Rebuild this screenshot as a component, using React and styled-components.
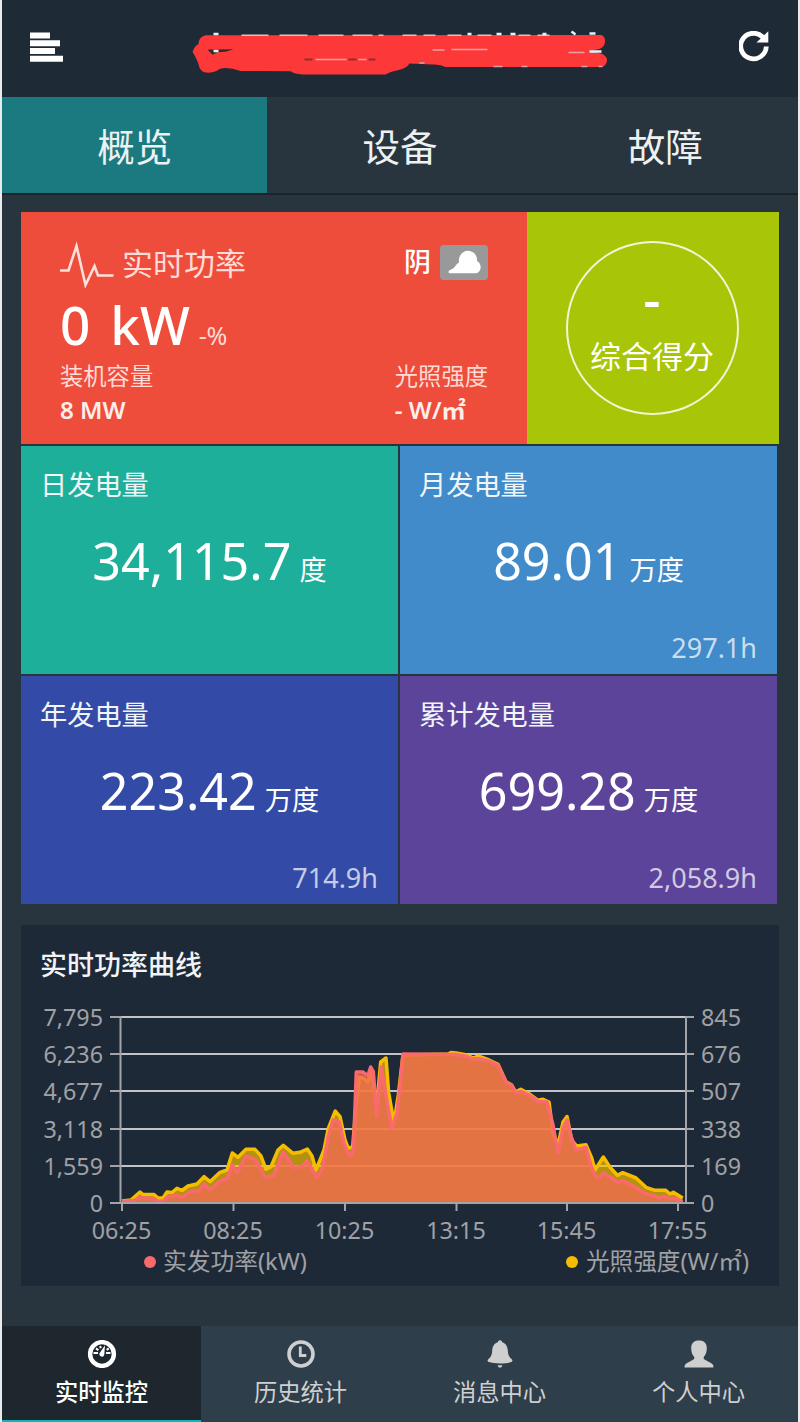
import styled, { createGlobalStyle } from "styled-components";

const tiles = [
  { label: "日发电量", value: "34,115.7", unit: "度", hours: "", color: "#1eaf9b" },
  { label: "月发电量", value: "89.01", unit: "万度", hours: "297.1h", color: "#418bca" },
  { label: "年发电量", value: "223.42", unit: "万度", hours: "714.9h", color: "#344aa7" },
  { label: "累计发电量", value: "699.28", unit: "万度", hours: "2,058.9h", color: "#5d449b" },
];

const rows = [
  { y: 1017, left: "7,795", right: "845" },
  { y: 1054, left: "6,236", right: "676" },
  { y: 1091, left: "4,677", right: "507" },
  { y: 1129, left: "3,118", right: "338" },
  { y: 1166, left: "1,559", right: "169" },
  { y: 1203, left: "0", right: "0" },
];

const times = [
  { x: 122, text: "06:25" },
  { x: 233.5, text: "08:25" },
  { x: 345, text: "10:25" },
  { x: 456.5, text: "13:15" },
  { x: 567, text: "15:45" },
  { x: 678, text: "17:55" },
];

const light =
  "122,1201 131,1200 140,1192 143,1194.5 154,1194.5 158,1198 163,1198 167,1192 172,1192.5 177,1188.3 182,1190.5 188,1186 197,1184 204,1176.7 210,1181.7 220,1172.3 227,1170 232.3,1153 238,1157.3 246,1149.3 255,1149.3 261,1156 266,1169.3 271,1166.7 278,1150 283.3,1145.3 293,1153.3 300,1152.3 307.3,1149 312,1156 316,1170 324,1150 328.3,1128.3 335.3,1111 340,1116.7 345,1140 348.3,1148.3 352.7,1146.7 356,1105 359.3,1077 363.3,1078 367.7,1082 371.7,1071 376.7,1106 380.7,1062 386,1058 388.7,1093 394,1122.7 398.3,1095 403,1055 448,1054 451,1052.5 456,1053 467,1055 473,1058 478,1056 489,1060 498,1064.3 506,1081.7 511.7,1085 515.7,1092 520.7,1089.3 530,1094.3 538,1100.3 543,1099.3 549,1102 553,1133 558,1145 563,1122 567,1116.5 571.7,1140 576.7,1146 586,1144.7 591.7,1158 595,1170 603.3,1157 610,1167.3 617.3,1175.3 622.7,1172.7 636,1178 646,1187.3 655,1190.3 665.7,1190.3 670,1194 673.3,1192.3 682.7,1198";

const power =
  "122,1201.5 134,1200.5 140,1197.7 154,1198.7 158,1201.5 163,1201.5 167,1197.3 177,1195.3 182,1197.3 190,1192 199,1190.7 204,1184 210,1190 220,1180.7 227,1178.7 232.3,1165 237.3,1172.7 246,1156 256,1160 265,1177.3 273.3,1176 283.3,1152 293.3,1167.3 301,1166.7 307.3,1161 316.7,1177.3 322.7,1168.3 328.3,1136.7 333,1120 339.3,1122 344,1143.3 349.3,1156 353.3,1151.7 356.3,1072 362.7,1072 367.7,1075.7 370.7,1067 373.3,1071.7 376.7,1116 381.3,1067 386.7,1100 391.7,1128.3 397,1113 400,1086 403,1054 456,1054.5 467,1056.5 473,1059 478,1058.5 489,1061 498,1065 506,1082 511.7,1085.5 515.7,1093 521,1091.5 530,1095.5 538,1101.5 547,1102 553,1125 558,1153 563,1128 567,1120 571,1136 576,1150 586,1147.5 591,1166 596,1177 600,1177 603.5,1173 610,1177 618,1182.5 623,1180.5 636,1187.5 645,1193.5 655,1196 659,1198 664,1196 670,1199 675,1198 682.7,1202";

function App() {
  return (
    <>
      <GlobalStyle />
      <Page>
        <Header>
          <MenuIcon />
          <TitleMark />
          <RefreshIcon />
        </Header>
        <Tabs>
          <Tab $active>概览</Tab>
          <Tab>设备</Tab>
          <Tab>故障</Tab>
        </Tabs>
        <Content>
          <TopRow>
            <PowerCard>
              <PowerHead>
                <PulseIcon />
                <PowerTitle>实时功率</PowerTitle>
                <Weather>阴</Weather>
                <WeatherBadge>
                  <CloudIcon />
                </WeatherBadge>
              </PowerHead>
              <PowerValue>
                <span>0</span>
                <span>kW</span>
                <small>-%</small>
              </PowerValue>
              <PowerInfo>
                <div>
                  <InfoLabel>装机容量</InfoLabel>
                  <InfoValue>8 MW</InfoValue>
                </div>
                <div>
                  <InfoLabel>光照强度</InfoLabel>
                  <InfoValue>- W/㎡</InfoValue>
                </div>
              </PowerInfo>
            </PowerCard>
            <ScoreCard>
              <ScoreCircle>
                <Score>-</Score>
                <ScoreLabel>综合得分</ScoreLabel>
              </ScoreCircle>
            </ScoreCard>
          </TopRow>
          <TileGrid>
            {tiles.map((tile) => (
              <Tile key={tile.label} $color={tile.color}>
                <TileLabel>{tile.label}</TileLabel>
                <TileValue>
                  {tile.value}
                  <TileUnit>{tile.unit}</TileUnit>
                </TileValue>
                <TileHours>{tile.hours}</TileHours>
              </Tile>
            ))}
          </TileGrid>
          <ChartPanel>
            <ChartTitle>实时功率曲线</ChartTitle>
            <PowerChart />
          </ChartPanel>
        </Content>
        <BottomNav>
          <NavItem $active>
            <GaugeIcon />
            <NavText $active>实时监控</NavText>
          </NavItem>
          <NavItem>
            <ClockIcon />
            <NavText>历史统计</NavText>
          </NavItem>
          <NavItem>
            <BellIcon />
            <NavText>消息中心</NavText>
          </NavItem>
          <NavItem>
            <UserIcon />
            <NavText>个人中心</NavText>
          </NavItem>
        </BottomNav>
      </Page>
    </>
  );
}

export default App;

function MenuIcon() {
  return (
    <svg width="34" height="30" viewBox="0 0 34 30" fill="#fff">
      <path d="M0 .5h20v6H0zM0 8.3h30v6H0zM0 16h25v6H0zM0 23.7h33v6H0z" />
    </svg>
  );
}

function RefreshIcon() {
  return (
    <svg width="32" height="32" viewBox="0 0 32 32">
      <path
        d="M25 7.700A12.800 12.800 0 1 0 27.300 15.500"
        fill="none"
        stroke="#fff"
        strokeWidth="4.800"
      />
      <path d="M29.300 .3v11.300H17.400z" fill="#fff" />
    </svg>
  );
}

// station name, scribbled over
function TitleMark() {
  return (
    <svg width="420" height="56" viewBox="191.500 19 420 56">
      <path
        d="M192 52Q194 46 198 44Q198 37 205 35.2L601 35Q605 37 604.5 42Q604 47 599 49L590 51L602 54Q607 57 606.5 61Q605 67 600 67L445 67Q440 64 432 64.5L409 63.5Q406 68 400 69.5Q392 71 385 74.5L302 74.5Q294 74 290 71.3L240 71Q232 68 225 68Q219 68 216 71Q209 74 203 72Q199 70 198 64Q195 56 192 52Z"
        fill="#fd3838"
      />
      <path d="M207 49.5h7l19-.3-8 2.5-8 .5-5 2.5Z" fill="#33292e" />
      <path
        d="M241 35.3h27M279 35.3h28M318 35.3h25M352 35.3h20M378 35.3h5M402 35.3h14M423 35.3h12M447 35.3h14M477 35.3h14M518 35.3h12M537 35.3h12"
        stroke="#d9c3c8"
        strokeWidth="1.6"
      />
      <path
        d="M213 34h5M213 51h5M467 34h4M496 34h5M510 34h5M542 34h4M571 31.500l4 3M589 33.500h6M589 51.500h12"
        stroke="#e6f2f6"
        strokeWidth="2.500"
      />
      <path d="M304 59.500h8M348 59.500h8M368 59.500h7" stroke="#8c3035" strokeWidth="2" />
      <path
        d="M315 59.500h31M358 59.500h8M432 50h12M451 49.500h36M568 52.500h16"
        stroke="#f0a0a2"
        strokeWidth="1.500"
      />
      <path d="M419 63h5M493 66.500h9M521 66.500h6M581 66.500h6M598 66.500h4" stroke="#d2a0a6" strokeWidth="1.400" />
    </svg>
  );
}

function PulseIcon() {
  return (
    <svg width="54" height="50" viewBox="0 -5 54 50">
      <path
        d="M0 27.500h8.500L16.500 3 25.500 42 34.500 23l3.500 9.500h15.500"
        fill="none"
        stroke="#fde0dc"
        strokeWidth="2.600"
      />
    </svg>
  );
}

function CloudIcon() {
  return (
    <svg width="33" height="24" viewBox="0 0 33 24" fill="#fff">
      <path d="M2 23.300C.2 23.300 0 21 1.800 20.200 4.500 19 6 18 7.200 16.200 8.300 14.300 9.600 13.300 11 12.800 10 6 14.500 .8 20 .8c5.500 0 9.600 4.700 9 10.200 2.700 1.300 4.200 4.600 3.500 7.500-.6 3-2.500 4.800-5 4.800Z" />
    </svg>
  );
}

function GaugeIcon() {
  return (
    <svg width="30" height="28" viewBox="0 0 30 28">
      <circle cx="15" cy="14" r="11.900" fill="none" stroke="#fff" strokeWidth="4.400" />
      <path d="M12.400 13.600 18 5.200 17.300 14.500Q17 16.800 15 16.800 12.300 16.300 12.400 13.600Z" fill="#fff" />
      <path d="M6.500 13h4.500M19 13h4.500M9 8.400l2.400 1.800M13.200 6l.5 2.200M19.700 9.900l2-1.500" stroke="#fff" strokeWidth="2" />
    </svg>
  );
}

function ClockIcon() {
  return (
    <svg width="30" height="28" viewBox="0 0 30 28" fill="none" stroke="#cfcfcf">
      <circle cx="15" cy="14" r="12" strokeWidth="3.600" />
      <path d="M14.300 6.500v9h6" strokeWidth="2.800" />
    </svg>
  );
}

function BellIcon() {
  return (
    <svg width="30" height="28" viewBox="0 0 30 28" fill="#cfcfcf">
      <path d="M15 .3c1.300 0 1.900 1 2.100 1.900 4 1.200 5.400 4.400 5.700 8.300.3 5 1.500 6.800 4.200 9 .8.800.4 2.300-.8 2.600-3 .8-6.500 1.300-11.200 1.300s-8.200-.5-11.200-1.300c-1.200-.3-1.600-1.800-.8-2.600 2.700-2.200 3.900-4 4.200-9 .3-3.900 1.700-7.100 5.700-8.300.2-.9.800-1.900 2.100-1.900Z" />
      <path d="M12.600 25.300h4.800l-.8 1.800q-1.600 1-3.200 0Z" />
    </svg>
  );
}

function UserIcon() {
  return (
    <svg width="30" height="28" viewBox="0 0 30 28" fill="#cfcfcf">
      <path d="M15 .4c5 0 7.800 2.500 7.800 7.500 0 3.800-1 7-3.100 9v1.700c.4 1.200 2.500 2 4.800 3.200 3 1.500 4.600 2.500 4.900 4.200v1.600H.6V26c.3-1.700 1.900-2.700 4.900-4.200 2.300-1.200 4.400-2 4.800-3.200v-1.700c-2.100-2-3.100-5.200-3.100-9C7.200 2.900 10 .4 15 .4Z" />
    </svg>
  );
}

function PowerChart() {
  return (
    <ChartSvg width="758" height="290" viewBox="21 996 758 290">
      {rows.map((row) => (
        <g key={row.y}>
          <line x1="120" x2="687" y1={row.y} y2={row.y} stroke="#c2c4c7" strokeWidth="2" />
          <text x="103" y={row.y + 8.500} textAnchor="end">
            {row.left}
          </text>
          <text x="701" y={row.y + 8.500}>
            {row.right}
          </text>
        </g>
      ))}
      <polygon points={`122,1203 ${light} 682.700,1203`} fill="#f5bd00" opacity="0.7" />
      <polyline points={light} fill="none" stroke="#f6bd00" strokeWidth="3.500" strokeLinejoin="round" />
      <polygon points={`122,1203 ${power} 682.700,1203`} fill="#f46a54" opacity="0.75" />
      <polyline points={power} fill="none" stroke="#fa6a6d" strokeWidth="3.500" strokeLinejoin="round" />
      <g stroke="#a3a4a7" strokeWidth="2">
        <path d="M120.500 1016v187M686 1016v187M110 1203h584" />
        {rows.map((row) => (
          <path key={row.y} d={`M110 ${row.y}h10M686 ${row.y}h8`} />
        ))}
        {times.map((time) => (
          <path key={time.text} d={`M${time.x} 1203v8`} />
        ))}
      </g>
      {times.map((time) => (
        <text key={time.text} x={time.x - 0.500} y="1238.500" textAnchor="middle">
          {time.text}
        </text>
      ))}
      <circle cx="150" cy="1262" r="6" fill="#fa6a6d" />
      <text x="163" y="1270" textLength="144" lengthAdjust="spacingAndGlyphs">
        实发功率(kW)
      </text>
      <circle cx="572" cy="1262" r="6" fill="#f5bd00" />
      <text x="586" y="1270" textLength="163" lengthAdjust="spacingAndGlyphs">
        光照强度(W/㎡)
      </text>
    </ChartSvg>
  );
}

const GlobalStyle = createGlobalStyle`
  * {
    box-sizing: border-box;
  }

  body {
    margin: 0;
    background: #e9ecee;
    font-family: "Noto Sans", "Noto Sans CJK SC", sans-serif;
  }

  svg {
    display: block;
    flex-shrink: 0;
  }
`;

const Page = styled.div`
  width: 796px;
  height: 1422px;
  margin-left: 2px;
  display: flex;
  flex-direction: column;
  background: #28353e;
  color: #fff;
  overflow: hidden;
`;

const Header = styled.header`
  height: 97px;
  flex-shrink: 0;
  display: flex;
  justify-content: space-between;
  align-items: center;
  padding: 0 27px 3px 28px;
  background: #1e2a35;
`;

const Tabs = styled.nav`
  height: 98px;
  flex-shrink: 0;
  display: flex;
  border-bottom: 2px solid #1b242b;
`;

const Tab = styled.div`
  flex: 1;
  display: flex;
  justify-content: center;
  padding-top: 3px;
  font-size: 37.500px;
  line-height: 93px;
  color: #eef1f2;
  background: ${(props) => (props.$active ? "#1a7a7f" : "transparent")};
`;

const Content = styled.main`
  flex: 1;
  display: flex;
  flex-direction: column;
  padding: 17px 19px 0;
`;

const TopRow = styled.section`
  height: 232px;
  display: flex;
`;

const PowerCard = styled.div`
  width: 506px;
  padding: 30px 39px 0;
  background: #ef4d3b;
`;

const PowerHead = styled.div`
  height: 42px;
  display: flex;
  align-items: center;
`;

const PowerTitle = styled.div`
  margin-left: 8px;
  font-size: 31px;
  line-height: 42px;
  color: #fddbd7;
`;

const Weather = styled.div`
  margin-left: auto;
  padding-bottom: 3px;
  font-size: 27px;
  line-height: 38px;
  font-weight: 500;
`;

const WeatherBadge = styled.div`
  width: 48px;
  height: 35px;
  margin: 0 0 2px 9px;
  display: flex;
  justify-content: center;
  align-items: center;
  border-radius: 4px;
  background: #999;
`;

const PowerValue = styled.div`
  height: 76px;
  display: flex;
  align-items: baseline;
  font-size: 53px;
  line-height: 81px;
  font-weight: 500;

  span + span {
    margin-left: 20px;
  }

  small {
    margin-left: 9px;
    font-size: 25px;
    font-weight: 400;
    color: #fddbd7;
    letter-spacing: -0.500px;
  }
`;

const PowerInfo = styled.div`
  display: flex;
  justify-content: space-between;
`;

const InfoLabel = styled.div`
  font-size: 23.300px;
  line-height: 33px;
  color: #fddbd7;
`;

const InfoValue = styled.div`
  font-size: 24.200px;
  line-height: 33px;
  font-weight: 600;
  color: #fdeeec;
`;

const ScoreCard = styled.div`
  flex: 1;
  display: flex;
  justify-content: center;
  align-items: center;
  padding-right: 2px;
  background: #a8c507;
`;

const ScoreCircle = styled.div`
  width: 173px;
  height: 174px;
  display: flex;
  flex-direction: column;
  align-items: center;
  padding-top: 25px;
  border: 2px solid #f1f6d8;
  border-radius: 50%;
`;

const Score = styled.div`
  font-size: 54px;
  line-height: 60px;
  font-weight: 500;
`;

const ScoreLabel = styled.div`
  font-size: 31px;
  line-height: 57px;
  white-space: nowrap;
`;

const TileGrid = styled.section`
  width: 756px;
  margin-top: 2px;
  display: grid;
  grid-template-columns: 1fr 1fr;
  grid-auto-rows: 228px;
  gap: 2px;
`;

const Tile = styled.div`
  display: flex;
  flex-direction: column;
  padding: 19px 20px 6px 19px;
  background: ${(props) => props.$color};
`;

const TileLabel = styled.div`
  font-size: 27.200px;
  line-height: 40px;
  color: #f0f5f8;
`;

const TileValue = styled.div`
  margin-top: 18px;
  padding-left: 1px;
  text-align: center;
  font-size: 50.200px;
  line-height: 76px;
`;

const TileUnit = styled.span`
  margin-left: 8px;
  font-size: 27.200px;
`;

const TileHours = styled.div`
  margin-top: auto;
  text-align: right;
  font-size: 27px;
  line-height: 40px;
  color: rgba(255, 255, 255, 0.72);
`;

const ChartPanel = styled.section`
  height: 361px;
  margin-top: 21px;
  background: #1e2938;
`;

const ChartTitle = styled.div`
  height: 71px;
  padding: 20px 19px 0;
  font-size: 27px;
  line-height: 40px;
  font-weight: 500;
  color: #f2f3f4;
`;

const ChartSvg = styled.svg`
  text {
    font-size: 23.300px;
    fill: #a0a1a4;
  }
`;

const BottomNav = styled.nav`
  height: 96px;
  flex-shrink: 0;
  display: flex;
  background: #2e3e4a;
`;

const NavItem = styled.div`
  flex: 1;
  display: flex;
  flex-direction: column;
  align-items: center;
  padding-top: 14px;
  background: ${(props) => (props.$active ? "#1d272d" : "transparent")};
  border-bottom: ${(props) => (props.$active ? "2px solid #10b5b5" : "none")};
`;

const NavText = styled.div`
  margin-top: 6px;
  font-size: 23.300px;
  line-height: 36px;
  font-weight: ${(props) => (props.$active ? 500 : 400)};
  color: ${(props) => (props.$active ? "#fff" : "#cfcfcf")};
`;
